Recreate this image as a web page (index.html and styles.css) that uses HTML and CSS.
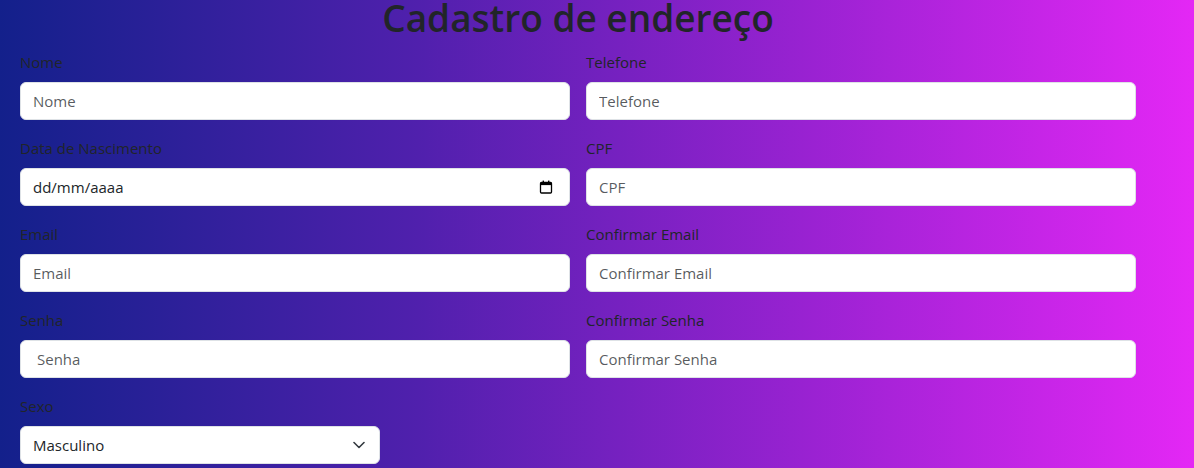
FILE: index.html
```html
<!DOCTYPE html>
<html lang="pt-BR">
<head>
<meta charset="utf-8">
<title>Cadastro de endereço</title>
<link rel="stylesheet" href="styles.css">
</head>
<body>
<main class="page">
  <h1 class="title">Cadastro de endereço</h1>
  <form class="form-grid">
    <div class="field">
      <label class="form-label" for="nome">Nome</label>
      <input class="form-control" id="nome" type="text" placeholder="Nome">
    </div>
    <div class="field">
      <label class="form-label" for="tel">Telefone</label>
      <input class="form-control" id="tel" type="text" placeholder="Telefone">
    </div>
    <div class="field">
      <label class="form-label" for="nasc">Data de Nascimento</label>
      <div class="form-control date-control" id="nasc">
        <span class="date-text">dd/mm/aaaa</span>
        <svg class="cal-icon" width="14" height="14" viewBox="0 0 14 14" aria-hidden="true">
          <rect x="1.5" y="2.5" width="11" height="10.5" rx="1" fill="none" stroke="#000" stroke-width="1.3"/>
          <rect x="1.5" y="2.5" width="11" height="2.6" fill="#000"/>
          <rect x="3.6" y="0.6" width="1.4" height="2.4" fill="#000"/>
          <rect x="9" y="0.6" width="1.4" height="2.4" fill="#000"/>
        </svg>
      </div>
    </div>
    <div class="field">
      <label class="form-label" for="cpf">CPF</label>
      <input class="form-control" id="cpf" type="text" placeholder="CPF">
    </div>
    <div class="field">
      <label class="form-label" for="email">Email</label>
      <input class="form-control" id="email" type="text" placeholder="Email">
    </div>
    <div class="field">
      <label class="form-label" for="cemail">Confirmar Email</label>
      <input class="form-control" id="cemail" type="text" placeholder="Confirmar Email">
    </div>
    <div class="field">
      <label class="form-label" for="senha">Senha</label>
      <input class="form-control indent" id="senha" type="password" placeholder="Senha">
    </div>
    <div class="field">
      <label class="form-label" for="csenha">Confirmar Senha</label>
      <input class="form-control" id="csenha" type="password" placeholder="Confirmar Senha">
    </div>
    <div class="field">
      <label class="form-label" for="sexo">Sexo</label>
      <div class="form-control select-control" id="sexo">
        <span>Masculino</span>
        <svg class="chev" width="12" height="8" viewBox="0 0 12 8" aria-hidden="true">
          <path d="M1 1.5 L6 6.5 L11 1.5" fill="none" stroke="#343a40" stroke-width="1.6" stroke-linecap="round" stroke-linejoin="round"/>
        </svg>
      </div>
    </div>
  </form>
</main>
</body>
</html>
```

FILE: styles.css
```css
* { box-sizing: border-box; }

html, body {
  margin: 0;
  height: 100%;
}

body {
  font-family: "Open Sans", "Noto Sans", sans-serif;
  font-size: 15px;
  line-height: 1.5;
  color: #212529;
  background: linear-gradient(to right, #13208b 0%, #5020ad 35%, #9a22d2 68%, #e427f5 100%);
  overflow: hidden;
}

.page {
  width: 1116px;
  margin-left: 20px;
}

.title {
  margin: 0 0 14px;
  font-size: 37px;
  font-weight: 600;
  line-height: 36px;
  text-align: center;
  color: #212529;
}

.form-grid {
  display: grid;
  grid-template-columns: 550px 550px;
  column-gap: 16px;
  row-gap: 16px;
}

.field {
  display: flex;
  flex-direction: column;
}

.form-label {
  display: block;
  margin-bottom: 8px;
  line-height: 24px;
  color: #212529;
}

.form-control {
  display: block;
  width: 100%;
  height: 38px;
  padding: 6px 12px;
  font: inherit;
  line-height: 24px;
  color: #212529;
  background: #fff;
  border: 1px solid #dee2e6;
  border-radius: 6px;
  outline: none;
}

.form-control::placeholder {
  color: rgba(33, 37, 41, 0.75);
}

.indent { padding-left: 16px; }

.date-control {
  display: flex;
  align-items: center;
  justify-content: space-between;
  padding-right: 16px;
}

.cal-icon { display: block; }

.select-control {
  width: 360px;
  display: flex;
  align-items: center;
  justify-content: space-between;
  padding-right: 14px;
}

.chev { display: block; }
```
